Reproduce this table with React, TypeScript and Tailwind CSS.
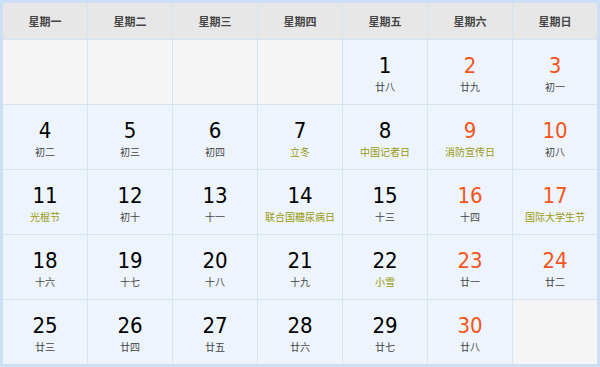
const weekdays = ["星期一", "星期二", "星期三", "星期四", "星期五", "星期六", "星期日"];

type Day = { d: number; label: string; festival?: boolean } | null;

const days: Day[] = [
  null, null, null, null,
  { d: 1, label: "廿八" },
  { d: 2, label: "廿九" },
  { d: 3, label: "初一" },
  { d: 4, label: "初二" },
  { d: 5, label: "初三" },
  { d: 6, label: "初四" },
  { d: 7, label: "立冬", festival: true },
  { d: 8, label: "中国记者日", festival: true },
  { d: 9, label: "消防宣传日", festival: true },
  { d: 10, label: "初八" },
  { d: 11, label: "光棍节", festival: true },
  { d: 12, label: "初十" },
  { d: 13, label: "十一" },
  { d: 14, label: "联合国糖尿病日", festival: true },
  { d: 15, label: "十三" },
  { d: 16, label: "十四" },
  { d: 17, label: "国际大学生节", festival: true },
  { d: 18, label: "十六" },
  { d: 19, label: "十七" },
  { d: 20, label: "十八" },
  { d: 21, label: "十九" },
  { d: 22, label: "小雪", festival: true },
  { d: 23, label: "廿一" },
  { d: 24, label: "廿二" },
  { d: 25, label: "廿三" },
  { d: 26, label: "廿四" },
  { d: 27, label: "廿五" },
  { d: 28, label: "廿六" },
  { d: 29, label: "廿七" },
  { d: 30, label: "廿八" },
  null,
];

const cjk = "font-['Noto_Sans_CJK_SC','Noto_Sans',sans-serif]";

export default function App() {
  return (
    <div className="w-[600px] h-[367px] bg-white">
      <div className="border-[3px] border-[#cddff5] bg-[#d6e3f2]">
        <div className="grid grid-cols-7 gap-px">
          {weekdays.map((w) => (
            <div
              key={w}
              className={`h-[36px] flex items-center justify-center bg-[#e7e7e7] text-[11px] font-bold text-[#444] ${cjk}`}
            >
              {w}
            </div>
          ))}
          {days.map((day, i) => {
            if (!day) {
              return <div key={i} className="h-[64px] bg-[#f5f5f5]" />;
            }
            const weekend = i % 7 >= 5;
            return (
              <div
                key={i}
                className="h-[64px] bg-[#edf4fb] flex flex-col items-center justify-center pt-[3px]"
              >
                <div
                  className={`text-[22px] leading-[24px] font-['DejaVu_Sans_Condensed','DejaVu_Sans',sans-serif] ${
                    weekend ? "text-[#f5541c]" : "text-black"
                  }`}
                >
                  {day.d}
                </div>
                <div
                  className={`mt-[2px] text-[10px] leading-[14px] ${cjk} ${
                    day.festival ? "text-[#9a9a10]" : "text-[#444]"
                  }`}
                >
                  {day.label}
                </div>
              </div>
            );
          })}
        </div>
      </div>
    </div>
  );
}
